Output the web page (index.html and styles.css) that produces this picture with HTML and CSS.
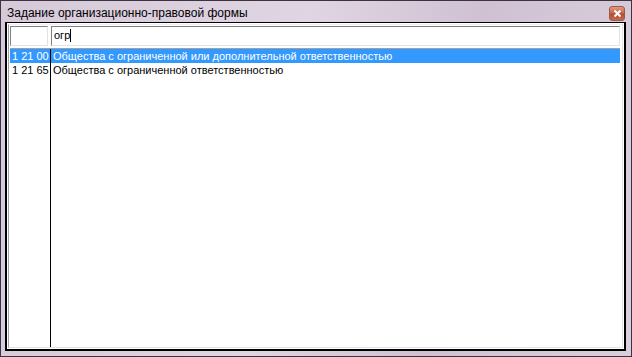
FILE: index.html
```html
<!DOCTYPE html>
<html lang="ru">
<head>
    <meta charset="UTF-8">
    <title>Задание организационно-правовой формы</title>
    <link rel="stylesheet" href="styles.css">
</head>
<body>
<div class="window">
    <div class="titlebar">
        <span class="title">Задание организационно-правовой формы</span>
        <div class="close">
            <svg width="9" height="9" viewBox="0 0 9 9">
                <path d="M1.5 1.5 L7.5 7.5 M7.5 1.5 L1.5 7.5" stroke="#fff" stroke-width="2"/>
            </svg>
        </div>
    </div>

    <div class="client">
        <div class="frame">
            <!-- search row -->
            <div class="search-row">
                <div class="code-box"></div>
                <div class="search-box">огр<span class="caret"></span></div>
            </div>

            <!-- result list -->
            <div class="list">
                <div class="col codes">
                    <div class="row selected">1 21 00</div>
                    <div class="row">1 21 65</div>
                </div>
                <div class="col names">
                    <div class="row selected">Общества с ограниченной или дополнительной ответственностью</div>
                    <div class="row">Общества с ограниченной ответственностью</div>
                </div>
            </div>
        </div>
    </div>
</div>
</body>
</html>
```

FILE: styles.css
```css
* {
    box-sizing: border-box;
    margin: 0;
    padding: 0;
}

body {
    width: 632px;
    height: 357px;
    overflow: hidden;
    font-family: "Liberation Sans", Arial, sans-serif;
}

.window {
    width: 632px;
    height: 357px;
    border: 1px solid #3a3440;
    background: linear-gradient(100deg, #d6c9d8 0%, #e0d5e2 45%, #cfc1d2 70%, #dacfdc 100%);
    display: flex;
    flex-direction: column;
    padding: 0 5px 5px 4px;
}

.titlebar {
    height: 21px;
    display: flex;
    align-items: center;
    justify-content: space-between;
    padding-left: 2px;
}

.title {
    font-size: 12px;
    color: #000;
    margin-top: 2px;
}

.close {
    width: 16px;
    height: 15px;
    margin-top: 4px;
    margin-right: 1px;
    border: 1px solid #9c5a4c;
    border-radius: 3px;
    background: linear-gradient(#dc9a86 0%, #c9684d 45%, #b44c33 55%, #c46a4f 100%);
    display: flex;
    align-items: center;
    justify-content: center;
}

.client {
    flex: 1;
    border: 1px solid #000;
    border-width: 1px 2px 2px 2px;
    background: #fff;
    padding: 1px;
    display: flex;
}

.frame {
    flex: 1;
    border-left: 1px solid #a0a0a0;
    border-top: 1px solid #f0f0f0;
    border-right: 1px solid #e3e3e3;
    border-bottom: 1px solid #e3e3e3;
    display: flex;
    flex-direction: column;
    padding: 1px 2px 0 1px;
}

.search-row {
    display: flex;
    height: 20px;
    gap: 3px;
}

.code-box,
.search-box {
    border-top: 1px solid #808080;
    border-left: 1px solid #808080;
    border-right: 1px solid #e3e3e3;
    border-bottom: 1px solid #e3e3e3;
    background: #fff;
}

.code-box {
    width: 38px;
}

.search-box {
    flex: 1;
    font-size: 11px;
    line-height: 17px;
    padding-left: 2px;
}

.caret {
    display: inline-block;
    width: 1px;
    height: 13px;
    background: #000;
    vertical-align: -3px;
}

.list {
    flex: 1;
    margin-top: 2px;
    border-top: 1px solid #a0a0a0;
    display: flex;
    font-size: 11px;
}

.col {
    display: flex;
    flex-direction: column;
}

.codes {
    width: 41px;
    border-right: 1px solid #000;
}

.names {
    flex: 1;
}

.row {
    height: 14px;
    line-height: 14px;
    white-space: nowrap;
    color: #000;
}

.codes .row {
    padding-left: 2px;
}

.names .row {
    padding-left: 2px;
}

.row.selected {
    background: #3399ff;
    color: #fff;
}
```
